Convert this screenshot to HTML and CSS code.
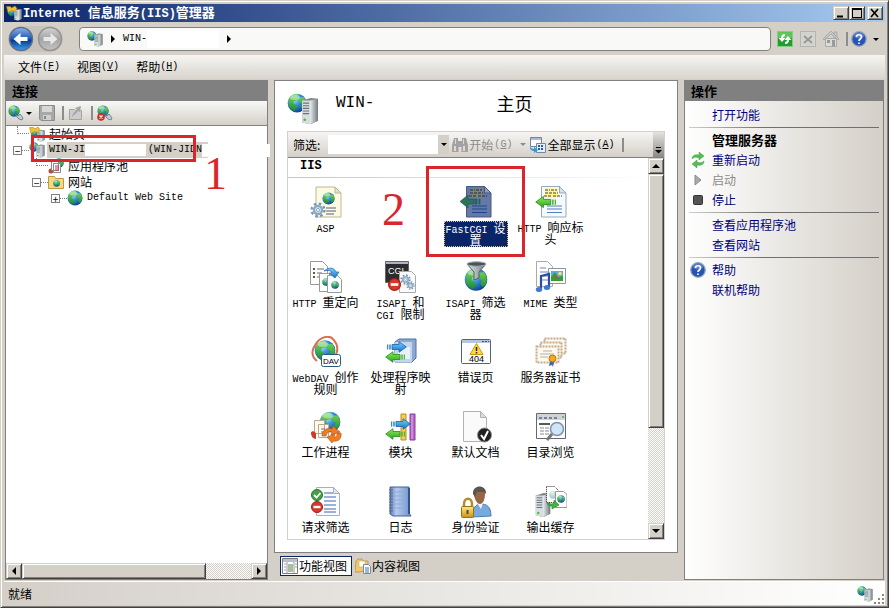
FILE: index.html
```html
<!DOCTYPE html>
<html lang="zh-CN">
<head>
	<meta charset="utf-8">
	<title>Internet 信息服务(IIS)管理器</title>
	<link rel="stylesheet" href="styles.css">
</head>
<body>

	<!-- Icon set, used further down with <use> -->
	<svg class="icon-defs" aria-hidden="true">
		<defs>
			<radialGradient id="g-sea" cx="35%" cy="30%" r="75%">
				<stop offset="0" stop-color="#b8ecff"/><stop offset=".4" stop-color="#3f9be0"/><stop offset="1" stop-color="#0a3c96"/>
			</radialGradient>
			<linearGradient id="g-land" x2="0" y2="1">
				<stop offset="0" stop-color="#7fdc5c"/><stop offset="1" stop-color="#178a30"/>
			</linearGradient>
			<linearGradient id="g-steel">
				<stop offset="0" stop-color="#e8ecee"/><stop offset="1" stop-color="#737a7e"/>
			</linearGradient>
			<linearGradient id="g-blue" x2="0" y2="1">
				<stop offset="0" stop-color="#7fd0fa"/><stop offset="1" stop-color="#1272c4"/>
			</linearGradient>
			<linearGradient id="g-green" x2="0" y2="1">
				<stop offset="0" stop-color="#8fec5c"/><stop offset="1" stop-color="#2ba31e"/>
			</linearGradient>
			<linearGradient id="g-gold" x2="0" y2="1">
				<stop offset="0" stop-color="#ffe98a"/><stop offset="1" stop-color="#c8921a"/>
			</linearGradient>
			<linearGradient id="g-nav" x2="0" y2="1">
				<stop offset="0" stop-color="#8fb4e8"/><stop offset=".5" stop-color="#1c56b4"/><stop offset=".55" stop-color="#0a3590"/><stop offset="1" stop-color="#3aa4f0"/>
			</linearGradient>
			<linearGradient id="g-navoff" x2="0" y2="1">
				<stop offset="0" stop-color="#d4d4d4"/><stop offset=".5" stop-color="#a4a4a4"/><stop offset="1" stop-color="#c4c4c4"/>
			</linearGradient>
			<linearGradient id="g-book">
				<stop offset="0" stop-color="#5a7cb8"/><stop offset=".3" stop-color="#b4cbee"/><stop offset="1" stop-color="#7090cc"/>
			</linearGradient>
		</defs>

		<symbol id="globe" viewBox="0 0 32 32">
			<circle cx="16" cy="16" r="15" fill="url(#g-sea)"/>
			<path d="M4 8C8 2 14 1 18 2l-2 4 3 2-4 4-4 1-1 4 4 2 2 4-4 6C6 27 2 20 3 13zM21 7l5-1c5 5 6 12 2 18l-4 2-2-5 2-4-5-3-1-4z" fill="url(#g-land)"/>
			<ellipse cx="13" cy="7" rx="8" ry="4" fill="#fff" opacity=".4"/>
		</symbol>
		<symbol id="server" viewBox="0 0 20 32">
			<path d="M1 4 11 1l8 1v25l-8 4-10-2z" fill="#7c8488"/>
			<path d="M1 4h9v27l-9-2z" fill="#d8dee0"/>
			<path d="M10 4l9-2v25l-9 4z" fill="url(#g-steel)"/>
			<path d="M2 7h7M2 10h7M2 13h7M2 16h7M2 19h7" stroke="#68747c" stroke-width="1.3"/>
			<circle cx="4" cy="26" r="1.5" fill="#54b832"/>
		</symbol>
		<symbol id="globe-server" viewBox="0 0 32 32">
			<use href="#globe" x="0" y="0" width="20" height="20"/>
			<use href="#server" x="14" y="4" width="18" height="28"/>
		</symbol>
		<symbol id="start-page" viewBox="0 0 32 32">
			<use href="#globe" x="3" y="5" width="18" height="18"/>
			<use href="#server" x="16" y="7" width="16" height="25"/>
			<path d="M1 3h8l2 3 7-4 4 5-4 6-7-2-7 4z" fill="#f0c030" stroke="#a87808"/>
		</symbol>
		<symbol id="gear" viewBox="0 0 20 20">
			<circle cx="10" cy="10" r="8" fill="none" stroke="#7896b4" stroke-width="3" stroke-dasharray="3.140 3.140"/>
			<circle cx="10" cy="10" r="5" fill="#eef4fa" stroke="#8ba8c4" stroke-width="3"/>
			<circle cx="10" cy="10" r="2" fill="#fff" stroke="#6f8cae"/>
		</symbol>
		<symbol id="arrow-right" viewBox="0 0 20 12">
			<path d="M5 3.500h7V.7L19.300 6 12 11.300V8.500H5z" fill="url(#g-blue)" stroke="#1264a8" stroke-width=".8"/>
			<path d="M.5 3.500v5M3 3.500v5" stroke="#2888d0" stroke-width="1.500"/>
		</symbol>
		<symbol id="arrow-left" viewBox="0 0 20 12">
			<path d="M15 3.500H8V.7L.7 6 8 11.300V8.500h7z" fill="url(#g-green)" stroke="#2a8a1a" stroke-width=".8"/>
			<path d="M17 3.500v5M19.500 3.500v5" stroke="#48b832" stroke-width="1.500"/>
		</symbol>
		<symbol id="forbid" viewBox="0 0 12 12">
			<circle cx="6" cy="6" r="5.500" fill="#d8382c" stroke="#a01c14"/><path d="M2.500 6h7" stroke="#fff" stroke-width="2.400"/>
		</symbol>

		<!-- Feature icons -->
		<symbol id="asp" viewBox="0 0 32 32">
			<path d="M6 1h19l6 6v24H6z" fill="#fdf9e2" stroke="#bdb898"/><path d="M25 1v6h6z" fill="#e8e0c0" stroke="#bdb898"/>
			<use href="#globe" x="12" y="6" width="13" height="13"/>
			<path d="M16 22h10M16 25h10M16 28h8" stroke="#56607c" stroke-width="1.200"/>
			<use href="#gear" x="0" y="16" width="16" height="16"/>
		</symbol>
		<symbol id="http-header" viewBox="0 0 32 32">
			<path d="M6.500.5h18L31 7v24H6.500z" fill="#f5faff" stroke="#98a8b8"/><path d="M24.500.5V7H31z" fill="#d6e2ee" stroke="#98a8b8"/>
			<path d="M10 2.500h13v9H10z" fill="#fff58c"/>
			<path d="M10 4h5m1 0h6M10 7h3m1 0h9M9 10h7m2 0h9" stroke="#444" stroke-width="1.200" stroke-dasharray="3 1"/>
			<path d="M12 20h15M12 23h15M12 26.500h15" stroke="#4f7fc0" stroke-width="1.200"/>
			<use href="#arrow-left" x="0" y="9" width="21" height="14"/>
		</symbol>
		<symbol id="fastcgi" viewBox="0 0 32 32">
			<path d="M6.500.5h18L31 7v24H6.500z" fill="#6679a5" stroke="#455a86"/><path d="M24.500.5V7H31z" fill="#8e9cc0" stroke="#455a86"/>
			<path d="M10 2.500h13v9H10z" fill="#7d8675"/>
			<path d="M10 4h5m1 0h6M10 7h3m1 0h9M9 10h7m2 0h9" stroke="#20284a" stroke-width="1.200" stroke-dasharray="3 1"/>
			<path d="M12 20h15M12 23h15M12 26.500h15" stroke="#1e4696" stroke-width="1.200"/>
			<path d="M14 13H8V9L0 15.500 8 22v-4h6zM15 13h2v5h-2zM19 13h1v5h-1z" fill="#2c7358" stroke="#1c5250" stroke-width=".6"/>
		</symbol>
		<symbol id="redirect" viewBox="0 0 32 32">
			<path d="M.5.500h12l5 5v18H.5z" fill="#fff" stroke="#999"/><path d="M3 8h2M3 12h2M3 16h2" stroke="#7c5038" stroke-width="2"/><path d="M7 8h7M7 12h5M7 16h5" stroke="#666"/>
			<path d="M9.500 12.500h9l3 3v15h-12z" fill="#fff" stroke="#999"/><use href="#globe" x="12" y="17" width="8" height="8"/>
			<path d="M17.500 14.500h10l4 4v13h-14z" fill="#fff" stroke="#999"/><use href="#globe" x="21" y="20" width="8" height="8"/>
			<path d="M14 10C19 6 24 6 26 11h3l-4 6-6-5h3c-1-3-4-3-8-2z" fill="url(#g-blue)" stroke="#1c64a8" stroke-width=".7"/>
		</symbol>
		<symbol id="filter-globe" viewBox="0 0 32 32">
			<use href="#globe" x="4" y="6" width="24" height="25"/>
			<path d="M7 3 14 11v8l5-2v-6l7-8z" fill="url(#g-steel)" stroke="#555f66"/>
			<ellipse cx="16.500" cy="3" rx="9.500" ry="2.200" fill="#4b5359" stroke="#a3abb0"/>
		</symbol>
		<symbol id="mime" viewBox="0 0 32 32">
			<path d="M1.500.5h11l5 5v20h-16z" fill="#fff" stroke="#aaa"/><path d="M5 7h6M5 11h8M5 15h8M5 19h8" stroke="#6f86b4"/>
			<path d="M13.500 7.500h17v15h-17z" fill="#fff" stroke="#8a97a4"/><path d="M16 10h12v10H16z" fill="#5aaae8"/>
			<path d="M16 20v-4l4-5 3 5 5-1v5z" fill="#3c9a32"/><circle cx="25" cy="12.500" r="1.800" fill="#ffe060"/><path d="M19 16l2-2 2 4z" fill="#d84030"/>
			<path d="M6 28V15l8-2v13" fill="none" stroke="#254fa0" stroke-width="2.200"/><ellipse cx="4" cy="28.500" rx="3.200" ry="2.500" fill="#3f78cf"/><ellipse cx="12" cy="26.500" rx="3.200" ry="2.500" fill="#3f78cf"/>
		</symbol>
		<symbol id="handler" viewBox="0 0 32 32">
			<path d="M10 6l4-3h17v19l-4 4H10z" fill="#8ba9d3" stroke="#50709c"/><path d="M10 6h17v20H10z" fill="#c3d6ef"/><path d="M13 11h12v12H13z" fill="#e7f0fb"/>
			<use href="#arrow-right" x="2" y="5" width="20" height="12"/><use href="#arrow-left" x="0" y="15" width="20" height="12"/>
		</symbol>
		<symbol id="certs" viewBox="0 0 32 32">
			<g fill="#fff8ec" stroke="#c4ab90"><path d="M9.500 2.500h21v15h-21z" stroke-width="2" stroke-dasharray="2 1"/><path d="M5.500 6.500h21v15h-21z" stroke-width="2" stroke-dasharray="2 1"/><path d="M1.500 10.500h22v16h-22z" stroke-width="2" stroke-dasharray="2 1"/></g>
			<path d="M8 15h9M5 18h14M5 21h8" stroke="#b0b0b0"/><path d="M15 25l-1 5 3-1 1 2 1-5z" fill="#3468b8"/><circle cx="17.500" cy="22.500" r="3.500" fill="#f5a81c" stroke="#b87408"/>
		</symbol>
		<symbol id="worker" viewBox="0 0 32 32">
			<use href="#globe" x="9" y="0" width="22" height="22"/>
			<path d="M4.500 9.500h10v13h-10zM8.500 13.500h10v13h-10z" fill="#fff8ee" stroke="#b8a890"/><path d="M1 22c0-3 5-2 5 1v5C3 28 1 25 1 22z" fill="#c83c28"/><path d="M11 18h4m-4 3h4" stroke="#777"/>
			<path d="M12 25c0-6 5-9 10-7l1-3 7 6-9 3 1-3c-3-1-5 0-6 4zM31 22c1 6-3 9-8 8l-1 2-5-6 8-3-1 3c3 0 3-1 3-4z" fill="#f07c20" stroke="#b85010" stroke-width=".6"/>
		</symbol>
		<symbol id="modules" viewBox="0 0 32 32">
			<path d="M16 3h5v26h-5z" fill="#f3cf58" stroke="#b98e1c"/><path d="M25 3h5v26h-5z" fill="#b765c8" stroke="#8a3a9c"/><path d="M27 4v24" stroke="#e2b3ea"/>
			<use href="#arrow-right" x="6" y="7" width="20" height="12"/><use href="#arrow-left" x="0" y="17" width="20" height="12"/>
		</symbol>
		<symbol id="default-doc" viewBox="0 0 32 32">
			<path d="M3.500.5h17l6 6v24h-23z" fill="#fafafa" stroke="#b2b2b2"/><path d="M20.500.5v6h6z" fill="#ddd" stroke="#b2b2b2"/>
			<circle cx="24.500" cy="24" r="7" fill="#222" stroke="#8a8a8a" stroke-width="1"/><path d="M21 24l3 4 4-8" fill="none" stroke="#fff" stroke-width="2"/>
		</symbol>
		<symbol id="browse" viewBox="0 0 32 32">
			<path d="M1.500 2.500h29v25h-29z" fill="#fff" stroke="#667"/><path d="M2 3h28v6H2z" fill="#ccd3da"/><path d="M4 7h3m2 0h3m2 0h3m2 0h3" stroke="#667" stroke-width="1.500"/><circle cx="28" cy="6" r="1" fill="#5aa83c"/>
			<path d="M4 13h11" stroke="#222" stroke-width="1.500"/><path d="M5 17h4m1 0h4M5 20h4m1 0h4M5 23h4m1 0h4" stroke="#889"/>
			<path d="M17 23l-5 6" stroke="#777" stroke-width="3"/><circle cx="22" cy="18" r="6.500" fill="#cfe6fa" stroke="#7f93ab" stroke-width="1.500"/>
		</symbol>
		<symbol id="request-filter" viewBox="0 0 32 32">
			<path d="M6.500 1.500h17l6 6v22h-23z" fill="#fbfcff" stroke="#a9b0bc"/><path d="M23.500 1.500v6h6z" fill="#dfe5ee" stroke="#a9b0bc"/>
			<path d="M14 7h9m-9 4h12m-12 4h12m-12 4h12m-12 4h12m-12 3h12" stroke="#3c67b0"/>
			<circle cx="7" cy="9" r="5.500" fill="#46a048" stroke="#2a7630"/><path d="M4 9l2.500 2.500L10.500 7" fill="none" stroke="#fff" stroke-width="1.800"/>
			<use href="#forbid" x="1" y="15" width="12" height="12"/>
		</symbol>
		<symbol id="logbook" viewBox="0 0 32 32">
			<path d="M5 1h19v26l2 3H8l-3-2z" fill="url(#g-book)" stroke="#46608f"/><path d="M9 6h13M9 10h13M9 14h13M9 18h13M9 22h13" stroke="#8fabdb"/><path d="M24 2v26" stroke="#2f548f" stroke-width="2"/>
			<path d="M4 4h4M4 7h4M4 10h4M4 13h4M4 16h4M4 19h4M4 22h4M4 25h4" stroke="#5d6e8a"/>
		</symbol>
		<symbol id="auth" viewBox="0 0 32 32">
			<path d="M12 31c0-9 4-13 9-13s10 2 10 12z" fill="#78aadd" stroke="#4c7cb2"/><path d="M17 17h6l-2 6z" fill="#f2f4f8"/>
			<path d="M14 7c0-8 12-8 11 0 0 7-2 11-5 11s-6-5-6-11z" fill="#996644"/><path d="M13 8c-1-10 14-10 13 0l-2-2h-7l-2 5z" fill="#5b5650"/>
			<path d="M4 22v-4c0-7 8-7 8 0v4" fill="none" stroke="#b58a28" stroke-width="2.500"/><rect x="1.500" y="20.500" width="12" height="11" rx="1" fill="url(#g-gold)" stroke="#97701a"/><path d="M7.500 24v4" stroke="#66490a" stroke-width="2"/>
		</symbol>
		<symbol id="cache" viewBox="0 0 32 32">
			<use href="#server" x="0" y="6" width="16" height="26"/>
			<path d="M11.500.5h8l4 4v12h-12z" fill="#fff" stroke="#333" stroke-dasharray="1 1"/><use href="#globe" x="14" y="5" width="8" height="8" opacity=".35"/>
			<path d="M20.500 5.500h8l3.500 3v13H20.500z" fill="#fff" stroke="#999"/><use href="#globe" x="22" y="9" width="8" height="8"/>
			<path d="M12 16c3 3 5 2 7 1v-3l5 5-7 4v-3c-3 0-5-1-5-4z" fill="#3db83c" stroke="#218026" stroke-width=".6"/>
		</symbol>

		<!-- Toolbar icons -->
		<symbol id="connect" viewBox="0 0 16 16">
			<use href="#globe" width="12" height="12"/>
			<path d="M7 9l3 2 2-2 3 4-1 2-3-1-2-2z" fill="#c2ccd6" stroke="#5b7085" stroke-width=".8"/>
		</symbol>
		<symbol id="disconnect" viewBox="0 0 16 16">
			<use href="#connect" width="16" height="16"/>
			<circle cx="4" cy="12" r="3.800" fill="#cf2a24"/><path d="M2.500 10.500l3 3m0-3l-3 3" stroke="#fff" stroke-width="1.300"/>
		</symbol>
		<symbol id="save" viewBox="0 0 16 16">
			<path d="M.5.5h15v15H2l-1.500-1.500z" fill="#a8a8a8" stroke="#8c8c8c"/><path d="M3 1h10v6H3z" fill="#d8d8d8"/><path d="M4 10h8v5H4z" fill="#d0d0d0"/><path d="M6 11v3" stroke="#888" stroke-width="2"/>
		</symbol>
		<symbol id="up-folder" viewBox="0 0 16 16">
			<path d="M1.500 4.500h5l1 1h6v9h-12z" fill="#ccc" stroke="#a3a3a3"/><path d="M4 12c1-5 4-6 5-7L7 3l6-2-1 6-2-1c-1 2-3 3-6 6z" fill="#a6a6a6"/>
		</symbol>
		<symbol id="pool" viewBox="0 0 16 16">
			<use href="#globe" x="6" width="10" height="10"/><circle cx="3" cy="13" r="2.500" fill="#c84030"/>
			<path d="M3.500 3.500h7v9h-7zM5.500 5.500h7v9h-7z" fill="#fff" stroke="#8a8a8a"/><path d="M7 8h4m-4 2h4m-4 2h4" stroke="#b33"/>
		</symbol>
		<symbol id="sites" viewBox="0 0 16 16">
			<path d="M.5 2.500h6l1 2h8v10H.5z" fill="#f6d880" stroke="#c09a40"/><use href="#globe" x="5" y="6" width="7" height="7"/>
		</symbol>
		<symbol id="refresh" viewBox="0 0 16 16">
			<rect x=".5" y=".5" width="15" height="15" fill="#5cc65c" stroke="#8cc88c"/><path d="M1 7h14v8H1z" fill="#0f9420" opacity=".8"/>
			<path d="M8 3C5 3 4 5 4 7H1.500L5 11l3.500-4H6c0-1 1-2 2-2zM8 13c3 0 4-2 4-4h2.500L11 5 7.500 9H10c0 1-1 2-2 2z" fill="#fff"/>
		</symbol>
		<symbol id="stop-nav" viewBox="0 0 16 16">
			<rect x=".5" y=".5" width="15" height="15" fill="#d3d3d0" stroke="#b4b4b0"/><path d="M4 5l8 7M12 5l-8 7" stroke="#999" stroke-width="2"/>
		</symbol>
		<symbol id="home" viewBox="0 0 16 16">
			<path d="M2.500 7.500h11v8h-11z" fill="#dadad8" stroke="#aaa"/><path d="M11 1h3v6h-3z" fill="#c6c6c4" stroke="#aaa"/><path d="M0 8l8-8 8 8-1 1-7-6-7 6z" fill="#c6c6c4" stroke="#999" stroke-width=".6"/><path d="M9 9h3v6H9zM4 9h3v3H4z" fill="#999"/>
		</symbol>
		<symbol id="help" viewBox="0 0 16 16">
			<circle cx="8" cy="8" r="7.300" fill="#2754b4" stroke="#9aa6be" stroke-width="1.300"/><ellipse cx="8" cy="4.500" rx="5" ry="3" fill="#7a9ce0" opacity=".6"/>
			<path d="M5.500 6c0-3 5-3 5 0 0 2-2.500 2-2.500 4M8 11.500v1.500" fill="none" stroke="#fff" stroke-width="1.700"/>
		</symbol>
		<symbol id="binoculars" viewBox="0 0 16 16">
			<path d="M2 1h4v3h4V1h4l2 7v7H9.500v-5h-3v5H0V8z" fill="#a2a2a2"/><path d="M2 9h2v5H2zM11 9h2v5h-2zM3 2h1v5H3zM11 2h1v5h-1z" fill="#dadada"/>
		</symbol>
		<symbol id="show-all" viewBox="0 0 16 16">
			<path d="M.5.500h11v9H.5z" fill="#fff" stroke="#758498"/><path d="M1 1h10v2H1z" fill="#a6bcd8"/><path d="M6.500 6.500h9v9h-9z" fill="#e6f0fc" stroke="#7286a8"/><path d="M8 9h2m1 0h2M8 12h2m1 0h2" stroke="#2860a8" stroke-width="2"/>
			<path d="M0 8c0 3 2 4 4 4v-2l4 3-4 3v-2c-3 0-5-2-4-6z" fill="#2e9adf"/>
		</symbol>
		<symbol id="feature-view" viewBox="0 0 16 16">
			<path d="M.5.500h15v15H.5z" fill="#fff" stroke="#7a7a7a"/><path d="M1 1h14v3H1z" fill="#b6bfd0"/><path d="M5 4v11M12 4v11" stroke="#999"/><path d="M2 6h2M2 9h2M2 12h2M13 6h2M13 9h2" stroke="#8fa4c4"/><path d="M6 7h5M6 9h5M6 11h5M6 13h5" stroke="#527b45"/>
		</symbol>
		<symbol id="content-view" viewBox="0 0 16 16">
			<path d="M1 3l2-2h4l1 2h5v9l-9 2H0z" fill="#f0cb68" stroke="#b49040" stroke-width=".8"/><path d="M4 3h6v6H4z" fill="#fff" stroke="#c0a870" stroke-width=".6"/>
			<path d="M8.500 6.500h5l2 2v7h-7z" fill="#fff" stroke="#7a8899"/><path d="M10 10h4m-4 2h4m-4 2h4" stroke="#3f6fb5"/>
		</symbol>
		<symbol id="restart" viewBox="0 0 12 16">
			<path d="M0 7C0 3 4 2 7 3V0l5 4-5 4V6C4 5 2 5 0 7zM12 9c0 4-4 5-7 4v3l-5-4 5-4v2c3 1 5 1 7-1z" fill="#55bd55" stroke="#349138" stroke-width=".4"/>
		</symbol>
	</svg>

	<div class="window">

		<!-- Title bar -->
		<header class="title-bar">
			<svg class="icon16"><use href="#start-page"/></svg>
			<h1><span class="en">Internet </span>信息服务<span class="en">(IIS)</span>管理器</h1>
			<div class="window-buttons">
				<button aria-label="最小化"><svg viewBox="0 0 12 10"><path d="M2 7.500h6v2H2z"/></svg></button>
				<button aria-label="最大化"><svg viewBox="0 0 12 10"><path d="M1 0h10v10H1zM2 2v7h8V2z" fill-rule="evenodd"/></svg></button>
				<button class="close-btn" aria-label="关闭"><svg viewBox="0 0 12 10"><path d="M2 1l7 8M9 1L2 9" stroke="#000" stroke-width="1.700"/></svg></button>
			</div>
		</header>

		<!-- Back, forward and address -->
		<nav class="nav-bar">
			<div class="nav-arrows">
				<button aria-label="后退"><svg viewBox="0 0 26 26"><circle cx="13" cy="13" r="11.500" fill="url(#g-nav)" stroke="#5f6f8c" stroke-width="1.500"/><path d="M5.500 13l7-6v4h7v4h-7v4z" fill="#fff"/></svg></button>
				<button aria-label="前进" disabled><svg viewBox="0 0 26 26"><circle cx="13" cy="13" r="11.500" fill="url(#g-navoff)" stroke="#949494" stroke-width="1.500"/><path d="M20.500 13l-7-6v4h-7v4h7v4z" fill="#e8e8e8"/></svg></button>
			</div>
			<div class="address">
				<svg class="icon16"><use href="#globe-server"/></svg>
				<span class="crumb-arrow"></span>
				<span class="en">WIN-</span>
				<span class="masked"></span>
				<span class="crumb-arrow"></span>
			</div>
			<div class="nav-tools">
				<button aria-label="刷新"><svg class="icon16"><use href="#refresh"/></svg></button>
				<button aria-label="停止" disabled><svg class="icon16"><use href="#stop-nav"/></svg></button>
				<button aria-label="主页" disabled><svg class="icon16"><use href="#home"/></svg></button>
				<span class="separator"></span>
				<button class="help-btn" aria-label="帮助"><svg class="icon16"><use href="#help"/></svg><span class="caret"></span></button>
			</div>
		</nav>

		<!-- Menu -->
		<div class="menu-bar">
			<button>文件<span class="en">(<u>F</u>)</span></button>
			<button>视图<span class="en">(<u>V</u>)</span></button>
			<button>帮助<span class="en">(<u>H</u>)</span></button>
		</div>

		<main class="panels">

			<!-- Connections -->
			<section class="connections">
				<h2 class="panel-title">连接</h2>
				<div class="tree-tools">
					<button aria-label="连接"><svg class="icon16"><use href="#connect"/></svg><span class="caret"></span></button>
					<button aria-label="保存" disabled><svg class="icon16"><use href="#save"/></svg></button>
					<span class="separator"></span>
					<button aria-label="向上" disabled><svg class="icon16"><use href="#up-folder"/></svg></button>
					<span class="separator"></span>
					<button aria-label="断开"><svg class="icon16"><use href="#disconnect"/></svg></button>
				</div>
				<ul class="tree">
					<li>
						<div class="node"><span class="branch"></span><svg class="icon16"><use href="#start-page"/></svg><span class="node-text">起始页</span></div>
					</li>
					<li>
						<div class="node">
							<button class="expander" aria-label="折叠">−</button><span class="twig"></span>
							<svg class="icon16"><use href="#globe-server"/></svg>
							<span class="node-text selected en">WIN-JI<span class="masked"></span>(WIN-JIDNH</span>
							<span class="mask-tail"></span>
							<span class="mark-box mark-box-server"></span>
							<span class="mark-number mark-one">1</span>
						</div>
						<ul>
							<li><div class="node"><span class="branch"></span><svg class="icon16"><use href="#pool"/></svg><span class="node-text">应用程序池</span></div></li>
							<li>
								<div class="node"><button class="expander" aria-label="折叠">−</button><span class="twig"></span><svg class="icon16"><use href="#sites"/></svg><span class="node-text">网站</span></div>
								<ul>
									<li><div class="node"><button class="expander" aria-label="展开">+</button><span class="twig"></span><svg class="icon16"><use href="#globe"/></svg><span class="node-text en">Default Web Site</span></div></li>
								</ul>
							</li>
						</ul>
					</li>
				</ul>
				<div class="scrollbar scrollbar-x">
					<button aria-label="向左滚动"><span class="tri tri-left"></span></button>
					<div class="thumb"></div>
					<div class="track"></div>
					<button aria-label="向右滚动"><span class="tri tri-right"></span></button>
				</div>
			</section>

			<!-- Feature view -->
			<section class="center">
				<div class="home">
					<div class="home-title">
						<svg class="icon32"><use href="#globe-server"/></svg>
						<h2><span class="en">WIN-</span><span class="masked"></span>主页</h2>
					</div>
					<div class="features">
						<div class="filter-bar">
							<label for="filter">筛选:</label>
							<div class="combo">
								<input type="text" id="filter">
								<button aria-label="筛选历史"><span class="caret"></span></button>
							</div>
							<button class="go-btn" disabled><svg class="icon16"><use href="#binoculars"/></svg>开始<span class="en">(<u>G</u>)</span><span class="caret"></span></button>
							<button><svg class="icon16"><use href="#show-all"/></svg>全部显示<span class="en">(<u>A</u>)</span></button>
							<span class="separator"></span>
							<button class="overflow" aria-label="更多"><svg viewBox="0 0 7 7"><path d="M1 0h5v1H1zM0 3h7L3.500 6.500z"/></svg></button>
						</div>
						<div class="feature-view">
							<div class="feature-list">
								<h3 class="en">IIS</h3>
								<div class="feature-grid">
									<button class="feature"><svg class="icon32"><use href="#asp"/></svg><span class="label"><span class="en">ASP</span></span></button>
									<span class="feature-gap"><span class="mark-number mark-two">2</span></span>
									<button class="feature current"><svg class="icon32"><use href="#fastcgi"/></svg><span class="label"><span class="en">FastCGI </span>设置</span><span class="mark-box mark-box-fastcgi"></span></button>
									<button class="feature"><svg class="icon32"><use href="#http-header"/></svg><span class="label"><span class="en">HTTP </span>响应标头</span></button>
									<button class="feature"><svg class="icon32"><use href="#redirect"/></svg><span class="label"><span class="en">HTTP </span>重定向</span></button>
									<button class="feature">
										<svg class="icon32" viewBox="0 0 32 32">
											<path d="M.5.500h23v21H.5z" fill="#2c2c2e" stroke="#666"/><path d="M1 1h22v2H1z" fill="#a8b4c8"/>
											<text x="3" y="13" class="svg-cgi">CGI</text>
											<path d="M14.500 10.500h12l4 4v17h-16z" fill="#fafafa" stroke="#aaa"/>
											<use href="#gear" x="15" y="13" width="11" height="11"/><use href="#gear" x="21" y="20" width="9" height="9"/>
											<use href="#forbid" x="3" y="17" width="13" height="13"/>
										</svg>
										<span class="label"><span class="en">ISAPI </span>和<span class="en"> CGI </span>限制</span>
									</button>
									<button class="feature"><svg class="icon32"><use href="#filter-globe"/></svg><span class="label"><span class="en">ISAPI </span>筛选器</span></button>
									<button class="feature"><svg class="icon32"><use href="#mime"/></svg><span class="label"><span class="en">MIME </span>类型</span></button>
									<button class="feature">
										<svg class="icon32" viewBox="0 0 32 32">
											<use href="#globe" x="4" y="3" width="22" height="23"/>
											<path d="M4 12C7 2 18-2 23 3M7 25c-7-5-5-13 0-18M22 2c6 6 6 12 4 16" fill="none" stroke="#dc6f49" stroke-width="2"/>
											<rect x="11.500" y="18.500" width="19" height="12" rx="2" fill="#fff" stroke="#285a80"/>
											<text x="13" y="28" class="svg-dav">DAV</text>
										</svg>
										<span class="label"><span class="en">WebDAV </span>创作规则</span>
									</button>
									<button class="feature"><svg class="icon32"><use href="#handler"/></svg><span class="label">处理程序映射</span></button>
									<button class="feature">
										<svg class="icon32" viewBox="0 0 32 32">
											<rect x="1.500" y="3.500" width="29" height="24" rx="1" fill="#fff" stroke="#52607a"/><path d="M2 4h28v3H2z" fill="#b8c6dd"/><path d="M22 5.500h2m1 0h2m1 0h1" stroke="#41506c"/>
											<path d="M16.500 7.500l6.500 11H10z" fill="#ffd834" stroke="#c89810"/><path d="M16.500 11v4m0 1v1.500" stroke="#222" stroke-width="1.500"/>
											<text x="9" y="26" class="svg-404">404</text>
										</svg>
										<span class="label">错误页</span>
									</button>
									<button class="feature"><svg class="icon32"><use href="#certs"/></svg><span class="label">服务器证书</span></button>
									<button class="feature"><svg class="icon32"><use href="#worker"/></svg><span class="label">工作进程</span></button>
									<button class="feature"><svg class="icon32"><use href="#modules"/></svg><span class="label">模块</span></button>
									<button class="feature"><svg class="icon32"><use href="#default-doc"/></svg><span class="label">默认文档</span></button>
									<button class="feature"><svg class="icon32"><use href="#browse"/></svg><span class="label">目录浏览</span></button>
									<button class="feature"><svg class="icon32"><use href="#request-filter"/></svg><span class="label">请求筛选</span></button>
									<button class="feature"><svg class="icon32"><use href="#logbook"/></svg><span class="label">日志</span></button>
									<button class="feature"><svg class="icon32"><use href="#auth"/></svg><span class="label">身份验证</span></button>
									<button class="feature"><svg class="icon32"><use href="#cache"/></svg><span class="label">输出缓存</span></button>
								</div>
							</div>
							<div class="scrollbar scrollbar-y">
								<button aria-label="向上滚动"><span class="tri tri-up"></span></button>
								<div class="thumb"></div>
								<div class="track"></div>
								<button aria-label="向下滚动"><span class="tri tri-down"></span></button>
							</div>
						</div>
					</div>
				</div>
				<div class="view-tabs">
					<button class="active"><svg class="icon16"><use href="#feature-view"/></svg>功能视图</button>
					<button><svg class="icon16"><use href="#content-view"/></svg>内容视图</button>
				</div>
			</section>

			<!-- Actions -->
			<aside class="actions">
				<h2 class="panel-title">操作</h2>
				<ul>
					<li><a href="#">打开功能</a></li>
				</ul>
				<h3>管理服务器</h3>
				<ul>
					<li><svg class="icon16"><use href="#restart"/></svg><a href="#">重新启动</a></li>
					<li class="disabled"><svg class="icon16" viewBox="0 0 16 16"><path d="M5 3l6 5-6 5z" fill="#aaa" stroke="#8c8c8c"/></svg><span>启动</span></li>
					<li><svg class="icon16" viewBox="0 0 16 16"><rect x="3.500" y="3.500" width="9" height="9" rx="1" fill="#555" stroke="#333"/></svg><a href="#">停止</a></li>
				</ul>
				<ul class="ruled">
					<li><a href="#">查看应用程序池</a></li>
					<li><a href="#">查看网站</a></li>
				</ul>
				<ul class="ruled">
					<li><svg class="icon16"><use href="#help"/></svg><a href="#">帮助</a></li>
					<li><a href="#">联机帮助</a></li>
				</ul>
			</aside>
		</main>

		<footer class="status-bar">
			<span>就绪</span>
			<svg class="icon16"><use href="#globe-server"/></svg>
			<svg class="grip" viewBox="0 0 12 12"><path d="M9 1h2v2H9zM5 5h2v2H5zM9 5h2v2H9zM1 9h2v2H1zM5 9h2v2H5zM9 9h2v2H9z" fill="#8c8880"/></svg>
		</footer>
	</div>

</body>
</html>
```
FILE: styles.css
```css
* {
	box-sizing: border-box;
}

body {
	margin: 0;
	font-family: "Noto Sans CJK SC", sans-serif;
	font-size: 12px;
	line-height: 16px;
	color: #000;
}

h1, h2, h3, ul {
	margin: 0;
	padding: 0;
	font-size: 13px;
	list-style: none;
}

ul {
	font-size: 12px;
}

button {
	display: flex;
	align-items: center;
	padding: 0;
	border: none;
	background: none;
	color: inherit;
	font: inherit;
	white-space: nowrap;
}

/* Latin text, half as wide as a Chinese character */
.en {
	font-family: "Liberation Mono", monospace;
	font-size: 10px;
	white-space: pre-wrap;
}

h1 .en {
	font-size: 12px;
}

.icon-defs {
	position: absolute;
	width: 0;
	height: 0;
}

.icon16 {
	flex: none;
	width: 16px;
	height: 16px;
}

.icon32 {
	flex: none;
	width: 32px;
	height: 32px;
}

.svg-cgi, .svg-dav, .svg-404 {
	font-family: "Liberation Sans", sans-serif;
	font-size: 9px;
}

.svg-cgi {
	fill: #fff;
}

.svg-dav {
	font-size: 8px;
}

/* Window frame */
.window {
	display: flex;
	flex-direction: column;
	height: 100vh;
	padding: 2px;
	border: 1px solid #d4d0c8;
	border-right-color: #404040;
	border-bottom-color: #404040;
	box-shadow: inset 1px 1px #fff, inset -1px -1px #808080;
	background: #d4d0c8;
	overflow: hidden;
}

/* Title bar */
.title-bar {
	display: flex;
	align-items: center;
	height: 18px;
	margin: 1px;
	padding: 0 2px;
	background: linear-gradient(to right, #0a246a, #a6caf0);
	color: #fff;
}

.title-bar h1 {
	flex: 1;
	padding-left: 1px;
}

.window-buttons {
	display: flex;
}

.window-buttons button,
.scrollbar button,
.thumb {
	justify-content: center;
	border: 1px solid;
	border-color: #d4d0c8 #404040 #404040 #d4d0c8;
	box-shadow: inset 1px 1px #fff, inset -1px -1px #808080;
	background: #d4d0c8;
}

.window-buttons button {
	width: 16px;
	height: 14px;
}

.window-buttons svg {
	width: 12px;
	height: 10px;
}

.window-buttons .close-btn {
	margin-left: 2px;
}

/* Navigation */
.nav-bar {
	display: flex;
	align-items: center;
	height: 32px;
	padding: 0 5px;
}

.nav-arrows {
	display: flex;
	gap: 3px;
	height: 26px;
	border-radius: 13px;
	background: #c8c4bc;
}

.nav-arrows svg {
	width: 26px;
	height: 26px;
}

.address {
	flex: 1;
	display: flex;
	align-items: center;
	height: 24px;
	margin-left: 16px;
	padding-left: 7px;
	border: 1px solid #808080;
	border-radius: 4px;
	background: #f9f9f7;
}

.crumb-arrow {
	margin: 0 8px;
	border: 4px solid transparent;
	border-left-color: #000;
	border-right: none;
}

.address .masked {
	width: 72px;
	height: 18px;
	background: #fff;
}

.nav-tools {
	display: flex;
	align-items: center;
	gap: 7px;
	padding-left: 6px;
}

.nav-tools .help-btn {
	gap: 6px;
	margin-left: -4px;
	padding-right: 2px;
}

.caret {
	border: 3px solid transparent;
	border-top-color: currentColor;
	border-bottom: none;
}

.separator {
	flex: none;
	width: 2px;
	height: 14px;
	background: #8c8c8c;
}

/* Menu */
.menu-bar {
	display: flex;
	gap: 17px;
	height: 24px;
	margin: 0 1px;
	padding-left: 14px;
	background: linear-gradient(#f6f5f3, #d8d4cd);
}

/* Three panels */
.panels {
	flex: 1;
	display: grid;
	grid-template-columns: 263px minmax(0, 1fr) 200px;
	gap: 6px;
	min-height: 0;
	padding: 1px 2px 0;
}

.panel-title {
	height: 20px;
	padding-left: 6px;
	background: #808080;
	line-height: 20px;
}

/* Connections */
.connections {
	display: flex;
	flex-direction: column;
	min-width: 0;
	border: 1px solid #808080;
	background: #fff;
}

.tree-tools {
	display: flex;
	align-items: center;
	gap: 7px;
	height: 25px;
	padding-left: 2px;
	border-bottom: 1px solid #808080;
	background: linear-gradient(#f8f8f6, #d4d0c8);
}

.tree-tools button {
	gap: 2px;
}

.tree-tools .separator + button {
	margin-left: -3px;
}

.tree {
	flex: 1;
}

.tree ul {
	padding-left: 19px;
}

.node {
	position: relative;
	display: flex;
	align-items: center;
	height: 16px;
	padding-left: 7px;
	white-space: nowrap;
}

.branch {
	align-self: flex-start;
	width: 12px;
	height: 8px;
	margin-left: 4px;
	border-bottom: 1px dotted #808080;
	border-left: 1px dotted #808080;
}

.expander {
	justify-content: center;
	width: 9px;
	height: 9px;
	border: 1px solid #808080;
	background: #fff;
	font-size: 10px;
	line-height: 7px;
}

.twig {
	width: 7px;
	border-top: 1px dotted #808080;
}

.node-text {
	padding-left: 4px;
}

.node-text.selected {
	display: flex;
	margin-left: 2px;
	padding-left: 2px;
	background: #d4d0c8;
}

.node .masked {
	width: 61px;
	height: 12px;
	margin: 2px 2px 2px 0;
	background: #fff;
}

/* White strip over the end of the server name */
.mask-tail {
	position: absolute;
	z-index: 1;
	top: 2px;
	left: 196px;
	width: 68px;
	height: 13px;
	background: #fff;
}

/* Red step marks */
.mark-box {
	position: absolute;
	z-index: 2;
	border: 3px solid #d9252b;
	pointer-events: none;
}

.mark-box-server {
	top: -7px;
	left: 25px;
	width: 165px;
	height: 27px;
}

.mark-box-fastcgi {
	top: -17px;
	left: -16px;
	width: 99px;
	height: 91px;
}

.mark-number {
	position: absolute;
	z-index: 2;
	color: #d9252b;
	font-family: "Liberation Serif", serif;
	font-size: 46px;
	line-height: 46px;
}

.mark-one {
	top: 9px;
	left: 198px;
}

.mark-two {
	top: 4px;
	left: 19px;
}

/* Scrollbars */
.scrollbar {
	display: flex;
	flex: none;
}

.scrollbar button {
	flex: none;
	width: 16px;
	height: 16px;
}

.scrollbar .track {
	background: repeating-conic-gradient(#d4d0c8 0 25%, #fff 0 50%) 0 0 / 2px 2px;
}

.scrollbar-y {
	flex-direction: column;
	width: 16px;
}

.scrollbar-x .thumb {
	flex: 4;
}

.scrollbar-x .track {
	flex: 1;
}

.scrollbar-y .thumb {
	flex: 8;
}

.scrollbar-y .track {
	flex: 3;
}

.tri {
	border: 4px solid transparent;
}

.tri-left {
	border-left: none;
	border-right-color: #000;
}

.tri-right {
	border-right: none;
	border-left-color: #000;
}

.tri-up {
	border-top: none;
	border-bottom-color: #000;
}

.tri-down {
	border-bottom: none;
	border-top-color: #000;
}

/* Center */
.center {
	display: flex;
	flex-direction: column;
	min-height: 0;
}

.home {
	flex: 1;
	display: flex;
	flex-direction: column;
	min-height: 0;
	padding: 12px;
	border: 1px solid #808080;
	background: #fff;
}

.home-title {
	display: flex;
	height: 38px;
}

.home-title h2 {
	display: flex;
	padding-left: 17px;
	font-size: 18px;
	font-weight: normal;
	line-height: 20px;
}

.home-title .en {
	font-size: 16px;
}

.home-title .masked {
	width: 122px;
}

.features {
	flex: 1;
	display: flex;
	flex-direction: column;
	min-height: 0;
	border: 1px solid #d4d0c8;
}

.filter-bar {
	display: flex;
	align-items: center;
	height: 26px;
	padding-left: 5px;
	border-bottom: 1px solid #808080;
	background: linear-gradient(#f6f5f3, #d4d0c8);
}

.combo {
	display: flex;
	width: 121px;
	height: 19px;
	margin: 0 3px 0 8px;
}

.combo input {
	flex: 1;
	min-width: 0;
	border: none;
	font: inherit;
}

.combo button {
	justify-content: center;
	width: 11px;
	background: #d4d0c8;
}

.filter-bar > button {
	gap: 1px;
}

.filter-bar .go-btn {
	margin-right: 4px;
	color: #8c8c8c;
}

.go-btn .caret {
	margin-left: 7px;
}

.filter-bar .separator {
	margin-left: 8px;
}

.filter-bar .overflow {
	align-items: flex-end;
	justify-content: center;
	width: 11px;
	height: 25px;
	margin-left: auto;
	padding-bottom: 3px;
	background: linear-gradient(#e4e2de, #8c8a86);
}

.overflow svg {
	width: 7px;
	height: 7px;
}

.feature-view {
	flex: 1;
	display: flex;
	min-height: 0;
}

.feature-list {
	flex: 1;
	overflow: hidden;
}

.feature-list h3 {
	height: 20px;
	padding-left: 12px;
	border-bottom: 1px solid;
	border-image: linear-gradient(to right, #a8cfe0, #fff) 1;
	font-size: 12px;
	line-height: 16px;
}

.feature-grid {
	display: grid;
	grid-template-columns: repeat(auto-fill, 75px);
	grid-auto-rows: 75px;
	padding-top: 5px;
}

.feature {
	position: relative;
	flex-direction: column;
	justify-self: center;
	gap: 3px;
	width: 68px;
	padding-top: 3px;
	white-space: normal;
}

.feature-gap {
	position: relative;
}

.label {
	max-width: 68px;
	line-height: 12px;
}

/* Keeps mixed lines at the height of the Chinese text */
.label .en {
	line-height: 0;
}

.current .label {
	width: 64px;
	border: 1px dotted #c8c4a0;
	background: #0a246a;
	color: #fff;
}

/* Tabs below the feature view */
.view-tabs {
	display: flex;
	gap: 1px;
	padding: 3px 6px 4px;
}

.view-tabs button {
	height: 20px;
	padding: 0 1px;
	border: 1px solid transparent;
}

.view-tabs svg {
	margin-right: 1px;
}

.view-tabs .active {
	padding-right: 4px;
	border-color: #0a246a;
	background: #fff;
}

/* Actions */
.actions {
	border: 1px solid #808080;
	background: linear-gradient(to right, #fff, #d4d0c8);
}

.actions ul {
	margin: 0 4px;
}

.actions ul:first-of-type {
	padding: 4px 0 2px;
}

.actions li {
	display: flex;
	align-items: center;
	height: 20px;
}

.actions li svg {
	margin: 0 -17px 0 1px;
}

.actions li > :last-child {
	margin-left: 23px;
}

.actions a {
	color: #00007c;
	text-decoration: none;
}

.actions .disabled {
	color: #8c8c8c;
}

.actions h3,
.actions .ruled {
	margin: 0 4px;
	padding-top: 2px;
	border-top: 1px solid;
	border-image: linear-gradient(to right, #d0d0d0, #707070 40%) 1;
}

.actions h3 {
	padding-left: 23px;
	line-height: 20px;
}

.actions .ruled {
	margin-top: 2px;
}

/* Status bar */
.status-bar {
	display: flex;
	align-items: center;
	height: 24px;
	margin: 1px 1px 0;
	padding-left: 4px;
	border-top: 1px solid #fff;
	background: linear-gradient(to right, #d4d0c8, #fff);
}

.status-bar span {
	flex: 1;
}

.grip {
	align-self: flex-end;
	width: 12px;
	height: 12px;
}
```
